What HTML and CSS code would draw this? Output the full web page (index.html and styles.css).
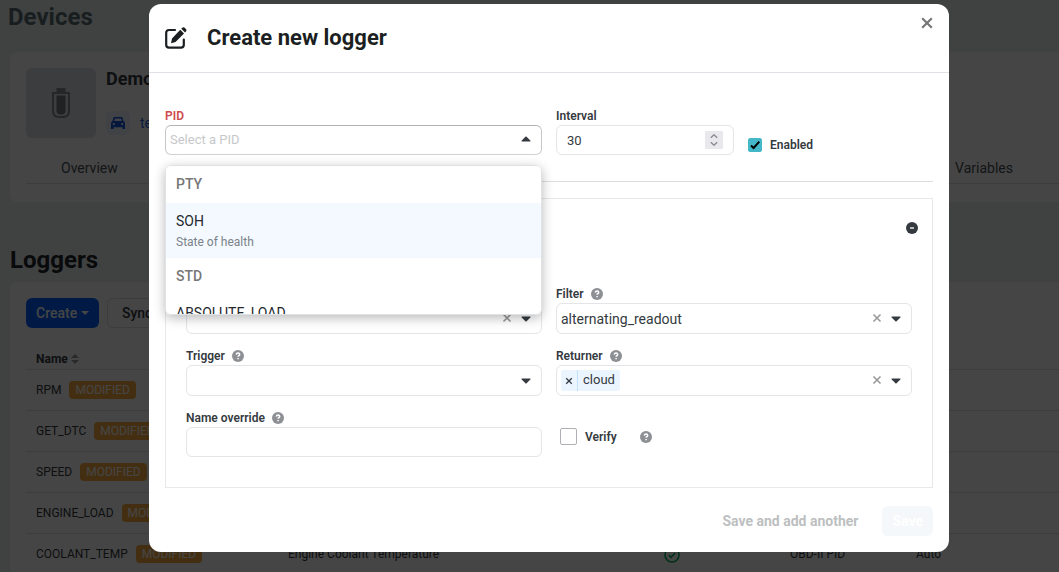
FILE: index.html
```html
<!DOCTYPE html>
<html lang="en">
<head>
<meta charset="utf-8">
<title>Create new logger</title>
<link rel="stylesheet" href="styles.css">
</head>
<body>
<svg class="sprite" aria-hidden="true">
  <symbol id="help" viewBox="0 0 12 12"><circle cx="6" cy="6" r="6" fill="#8c9094"/><path d="M4.300 4.600C4.400 3.500 5.100 3 6 3s1.700.6 1.700 1.400c0 1.100-1.600 1.200-1.600 2.300M6.100 8v1.300" fill="none" stroke="#fff" stroke-width="1.500"/></symbol>
  <symbol id="caret" viewBox="0 0 10 6"><path d="M1.200.5h7.600c.6 0 .9.6.5 1L5.600 5.200q-.6.5-1.200 0L.7 1.500C.3 1.100.6.5 1.200.5z" fill="#343a40"/></symbol>
  <symbol id="cross" viewBox="0 0 10 10"><path d="M1.500 1.500l7 7M8.500 1.500l-7 7" fill="none" stroke="currentColor" stroke-width="1.600"/></symbol>
  <symbol id="check" viewBox="0 0 16 16"><circle cx="8" cy="8" r="7" fill="none" stroke="#00b15d" stroke-width="1.600"/><path d="M4.800 8.200l2.300 2.200 4.200-4.400" fill="none" stroke="#00b15d" stroke-width="1.600"/></symbol>
</svg>

<main class="page">
  <h1 class="page-title">Devices</h1>
  <section class="card device">
    <div class="device-head">
      <div class="device-image">
        <svg width="18" height="30" viewBox="0 0 18 30"><path d="M4.500 0h9v4h-9z" fill="#888b90"/><path d="M1 5h16v18q0 6-6 6H7q-6 0-6-6z" fill="none" stroke="#888b90" stroke-width="2"/><path d="M4.500 7.500h9v15q0 4-4 4h-1q-4 0-4-4z" fill="#777a80"/></svg>
      </div>
      <div class="device-info">
        <h2 class="device-name">Demo device</h2>
        <div class="device-tag">
          <span class="device-icon"><svg width="14" height="12" viewBox="0 0 14 12"><path d="M2.800 0h8.400l1.400 4.200q1.400.5 1.400 2V12h-2.500v-1.800h-9V12H0V6.200q0-1.500 1.400-2zM4 1.500L3.200 4h7.600L10 1.500zM2.800 6a1 1 0 100 2.200 1 1 0 000-2.200zm8.400 0a1 1 0 100 2.200 1 1 0 000-2.200z" fill="#1557e0" fill-rule="evenodd"/></svg></span>
          <a class="device-link" href="#">test</a>
        </div>
      </div>
    </div>
    <nav class="tabs"><a href="#">Overview</a><a href="#">Variables</a></nav>
  </section>

  <h2 class="section-title">Loggers</h2>
  <section class="card loggers">
    <div class="toolbar">
      <button class="btn btn-blue">Create <span class="tri"></span></button>
      <button class="btn btn-outline">Sync</button>
    </div>
    <table class="table">
      <thead><tr><th>Name <svg class="sort" width="8" height="10" viewBox="0 0 8 10"><path d="M0 4l4-4 4 4zM0 6h8l-4 4z" fill="#999"/></svg></th><th></th><th></th><th></th><th></th></tr></thead>
      <tbody>
        <tr><td>RPM <span class="badge">MODIFIED</span></td><td></td><td></td><td></td><td></td></tr>
        <tr><td>GET_DTC <span class="badge">MODIFIED</span></td><td></td><td></td><td></td><td></td></tr>
        <tr><td>SPEED <span class="badge">MODIFIED</span></td><td></td><td></td><td></td><td></td></tr>
        <tr><td>ENGINE_LOAD <span class="badge">MODIFIED</span></td><td></td><td></td><td></td><td></td></tr>
        <tr><td>COOLANT_TEMP <span class="badge">MODIFIED</span></td><td>Engine Coolant Temperature</td><td><svg class="ok" width="16" height="16"><use href="#check"/></svg></td><td>OBD-II PID</td><td>Auto</td></tr>
      </tbody>
    </table>
  </section>
</main>

<div class="overlay">
  <form class="modal" role="dialog" aria-labelledby="modal-title">
    <header class="modal-header">
      <svg width="22" height="22" viewBox="0 0 22 22"><path d="M10 3H4Q1.200 3 1.200 5.800v12Q1.200 20.600 4 20.600h12q2.800 0 2.800-2.800V12.500" fill="none" stroke="#1b1f22" stroke-width="2.200" stroke-linecap="round"/><path d="M15.300 2.800l3.700 3.700-8.500 8.600-4.500 1.200 1-4.700zM16.300 1.700l.9-.9q1.200-1 2.500 0l1.200 1.200q1.200 1.300 0 2.500l-.9.900z" fill="#1b1f22"/></svg>
      <h2 class="modal-title" id="modal-title">Create new logger</h2>
      <button class="close" type="button" aria-label="Close"><svg width="12" height="12" viewBox="0 0 12 12"><path d="M1.200 1.200l9.600 9.600M10.800 1.200l-9.600 9.600" stroke="#777" stroke-width="2.200"/></svg></button>
    </header>

    <div class="modal-body">
      <div class="row">
        <div class="field">
          <label class="label label-error" for="pid">PID</label>
          <div class="control">
            <input class="input combo" id="pid" type="text" placeholder="Select a PID" role="combobox" aria-expanded="true" aria-controls="pid-list">
            <svg class="arrow arrow-up" width="10" height="6"><use href="#caret"/></svg>
            <ul class="menu" id="pid-list" role="listbox">
              <li class="group">PTY</li>
              <li class="option active" role="option" aria-selected="true">SOH<small>State of health</small></li>
              <li class="group">STD</li>
              <li class="option" role="option" aria-selected="false">ABSOLUTE_LOAD</li>
            </ul>
          </div>
        </div>
        <div class="interval-row">
          <div class="field">
            <label class="label" for="interval">Interval</label>
            <div class="control">
              <input class="input number" id="interval" type="number" value="30">
              <span class="spin"><svg width="8" height="12" viewBox="0 0 8 12"><path d="M.8 3.800L4 .8l3.200 3M.8 8.200l3.200 3 3.200-3" fill="none" stroke="#8b8b93" stroke-width="1.400"/></svg></span>
            </div>
          </div>
          <label class="check-label enabled"><input class="check teal" type="checkbox" checked>Enabled</label>
        </div>
      </div>

      <hr class="rule">

      <section class="box">
        <div class="box-head">
          <button class="remove" type="button" aria-label="Remove"><svg width="12" height="12" viewBox="0 0 12 12"><circle cx="6" cy="6" r="6" fill="#343a40"/><path d="M4 6h4" stroke="#fff" stroke-width="1.300"/></svg></button>
        </div>
        <div class="grid">
          <div class="field">
            <label class="label" for="parser">Parser <svg width="12" height="12"><use href="#help"/></svg></label>
            <div class="control">
              <select class="input select" id="parser"><option></option></select>
              <button class="clear" type="button" aria-label="Clear"><svg width="10" height="10"><use href="#cross"/></svg></button>
              <svg class="arrow" width="10" height="6"><use href="#caret"/></svg>
            </div>
          </div>
          <div class="field">
            <label class="label" for="filter">Filter <svg width="12" height="12"><use href="#help"/></svg></label>
            <div class="control">
              <select class="input select" id="filter"><option>alternating_readout</option></select>
              <button class="clear" type="button" aria-label="Clear"><svg width="10" height="10"><use href="#cross"/></svg></button>
              <svg class="arrow" width="10" height="6"><use href="#caret"/></svg>
            </div>
          </div>
          <div class="field">
            <label class="label" for="trigger">Trigger <svg width="12" height="12"><use href="#help"/></svg></label>
            <div class="control">
              <select class="input select" id="trigger"><option></option></select>
              <svg class="arrow" width="10" height="6"><use href="#caret"/></svg>
            </div>
          </div>
          <div class="field">
            <span class="label" id="returner">Returner <svg width="12" height="12"><use href="#help"/></svg></span>
            <div class="control">
              <div class="input select tags" role="group" aria-labelledby="returner">
                <span class="tag"><button class="tag-x" type="button" aria-label="Remove cloud"><svg width="8" height="8"><use href="#cross"/></svg></button><span class="tag-text">cloud</span></span>
              </div>
              <button class="clear" type="button" aria-label="Clear"><svg width="10" height="10"><use href="#cross"/></svg></button>
              <svg class="arrow" width="10" height="6"><use href="#caret"/></svg>
            </div>
          </div>
          <div class="field">
            <label class="label" for="override">Name override <svg width="12" height="12"><use href="#help"/></svg></label>
            <input class="input" id="override" type="text">
          </div>
          <div class="verify">
            <label class="check-label"><input class="check large" type="checkbox">Verify</label>
            <svg width="12" height="12"><use href="#help"/></svg>
          </div>
        </div>
      </section>
    </div>

    <footer class="modal-footer">
      <button class="btn btn-text" type="button" disabled>Save and add another</button>
      <button class="btn btn-save" type="submit" disabled>Save</button>
    </footer>
  </form>
</div>
</body>
</html>
```
FILE: styles.css
```css
* { box-sizing: border-box; }

body {
  margin: 0;
  height: 100vh;
  overflow: hidden;
  background: #edf3f3;
  color: #343a40;
  font: 14px/20px Roboto, sans-serif;
}

h1, h2, ul { margin: 0; padding: 0; }
button, input, select { font: inherit; color: inherit; }
a { color: inherit; text-decoration: none; }
svg { flex: none; }
.sprite { display: none; }

/* Page behind the dialog */
.page { padding: 2px 0 0 10px; }
.page-title { font-size: 24px; line-height: 30px; color: #5b7073; margin-left: -2px; }
.card { background: #fff; border-radius: 8px 0 0 8px; padding: 16px 0 0 16px; }
.device { margin-top: 20px; padding-bottom: 18px; }
.device-head { display: flex; gap: 10px; }
.device-image {
  width: 70px;
  height: 70px;
  border-radius: 6px;
  background: #dde1e8;
  display: grid;
  place-items: center;
}
.device-name { font-size: 18px; line-height: 22px; }
.device-tag { display: flex; align-items: center; gap: 10px; margin-top: 21px; }
.device-icon {
  width: 24px;
  height: 24px;
  border-radius: 6px;
  background: #edf2ff;
  display: grid;
  place-items: center;
}
.device-link { color: #2a66e8; }
.tabs {
  display: flex;
  justify-content: space-between;
  margin-top: 15px;
  padding: 5px 46px 5px 35px;
  border-bottom: 1px solid #dbe0e3;
  color: #495057;
}
.section-title { margin-top: 43px; font-size: 24px; line-height: 30px; color: #212529; }
.loggers { margin-top: 7px; }
.toolbar { display: flex; gap: 8px; }

.btn {
  height: 30px;
  padding: 0 10px;
  border: 0;
  border-radius: 6px;
  font-weight: 500;
  white-space: nowrap;
}
.btn-blue { background: #0061ff; color: #fff; display: flex; align-items: center; gap: 4px; }
.tri { border: 4px solid transparent; border-top-color: #fff; border-bottom: 0; }
.btn-outline { background: #fff; border: 1px solid #d9dde0; width: 60px; }

.table { width: 100%; margin-top: 21px; border-collapse: collapse; table-layout: fixed; font-size: 12px; }
.table th { height: 20px; padding: 0 10px; text-align: left; border-bottom: 1px solid #dbe0e3; }
.table td { height: 41px; padding: 0 10px; border-bottom: 1px solid #dbe0e3; white-space: nowrap; }
.table th:nth-child(1) { width: 252px; }
.table th:nth-child(2) { width: 376px; }
.table th:nth-child(3) { width: 126px; }
.table th:nth-child(4) { width: 126px; }
.sort { vertical-align: -1px; }
.ok { vertical-align: middle; }
.badge {
  display: inline-block;
  margin-left: 5px;
  padding: 0 6px;
  border-radius: 4px;
  background: #f9ab40;
  color: #fff;
  line-height: 18px;
}

/* Dialog */
.overlay {
  position: fixed;
  inset: 0;
  padding: 4px 110px 20px 149px;
  background: rgba(0, 0, 0, .73);
}
.modal { background: #fff; border-radius: 12px; }
.modal-header {
  position: relative;
  display: flex;
  align-items: center;
  gap: 20px;
  height: 69px;
  padding: 0 16px;
  border-bottom: 1px solid #dee2e6;
  color: #1b1f22;
}
.modal-title { font-size: 22px; line-height: 28px; }
.close {
  position: absolute;
  top: 13px;
  right: 16px;
  padding: 0;
  border: 0;
  background: none;
  display: flex;
}
.modal-body { padding: 34px 16px 0; }
.row, .grid { display: grid; grid-template-columns: 1fr 1fr; gap: 13px 14px; }
.interval-row { display: grid; grid-template-columns: 178px 1fr; gap: 14px; }
.field { display: flex; flex-direction: column; min-width: 0; }
.label {
  display: flex;
  align-items: center;
  gap: 7px;
  font-size: 12px;
  line-height: 18px;
  font-weight: 600;
}
.label-error { color: #cf4a4f; }
.control { position: relative; }
.input {
  display: block;
  width: 100%;
  height: 30px;
  padding: 0 10px;
  border: 1px solid #e3e5e9;
  border-radius: 6px;
  background: #fff;
  font-size: 14px;
}
.combo { padding: 0 4px 1px; font-size: 13px; border-color: #b2b4b7 #c4c6c9 #d0d2d5; outline: 0; }
.combo::placeholder { color: #c6c8ca; }
.number { appearance: textfield; font-size: 13px; }
.number::-webkit-inner-spin-button { appearance: none; }
.select { appearance: none; height: 31px; padding: 0 4px; }
.tags { display: flex; align-items: center; }
.arrow { position: absolute; right: 11px; top: 13px; }
.arrow-up { transform: rotate(180deg); top: 11px; }
.clear {
  position: absolute;
  right: 30px;
  top: 10px;
  display: flex;
  padding: 0;
  border: 0;
  background: none;
  color: #999;
}
.spin {
  position: absolute;
  right: 11px;
  top: 6px;
  width: 18px;
  height: 18px;
  background: #e9e8ed;
  display: grid;
  place-items: center;
  pointer-events: none;
}
.tag { display: flex; height: 21px; border-radius: 2px; background: #ebf5ff; }
.tag-x {
  width: 17px;
  padding: 0;
  border: 0;
  border-right: 1px solid #c2e0ff;
  background: none;
  display: grid;
  place-items: center;
}
.tag-text { padding: 0 5px; font-size: 13px; }

.menu {
  position: absolute;
  z-index: 2;
  top: 40px;
  left: 0;
  right: 0;
  height: 150px;
  overflow-y: auto;
  scrollbar-width: none;
  list-style: none;
  background: #fff;
  border: 1px solid #e0e3e6;
  border-radius: 6px;
  box-shadow: 0 3px 12px rgba(0, 0, 0, .28);
}
.group { padding: 8px 10px 9px; font-weight: 500; color: #777; }
.option { padding: 8px 10px 6px; color: #24282c; }
.option small { display: block; margin-top: 1px; font-size: 12px; color: #7b828a; }
.active { background: #f3f9fe; }

.check-label { display: flex; align-items: center; gap: 8px; font-size: 12px; line-height: 16px; font-weight: 600; }
.enabled { align-self: end; height: 20px; }
.check {
  appearance: none;
  flex: none;
  width: 14px;
  height: 14px;
  margin: 0;
  border: 1px solid #adb0b4;
  border-radius: 2px;
}
.teal {
  border-color: #44b8c8;
  background: #44b8c8 url("data:image/svg+xml,%3Csvg xmlns='http://www.w3.org/2000/svg' viewBox='0 0 12 12'%3E%3Cpath d='M2 6.500l2.600 2.500L10.300 2.700' fill='none' stroke='black' stroke-width='2'/%3E%3C/svg%3E") center / 12px no-repeat;
}
.large { width: 17px; height: 17px; }
.verify { align-self: end; display: flex; align-items: center; gap: 23px; padding: 0 4px 12px; }

.rule { margin: 26px 0 16px; border: 0; border-top: 1px solid #dcdfe2; }
.box { border: 1px solid #e6e8ea; padding: 23px 20px 30px; }
.box-head { display: flex; justify-content: flex-end; margin: 0 -6px 51px 0; }
.remove { display: flex; padding: 0; border: 0; background: none; }

.modal-footer { display: flex; justify-content: flex-end; gap: 14px; padding: 18px 16px 16px; }
.btn-text { background: none; color: #bdbfc1; font-weight: 700; }
.btn-save { background: #f4f8fa; color: #fff; font-weight: 700; }
```
